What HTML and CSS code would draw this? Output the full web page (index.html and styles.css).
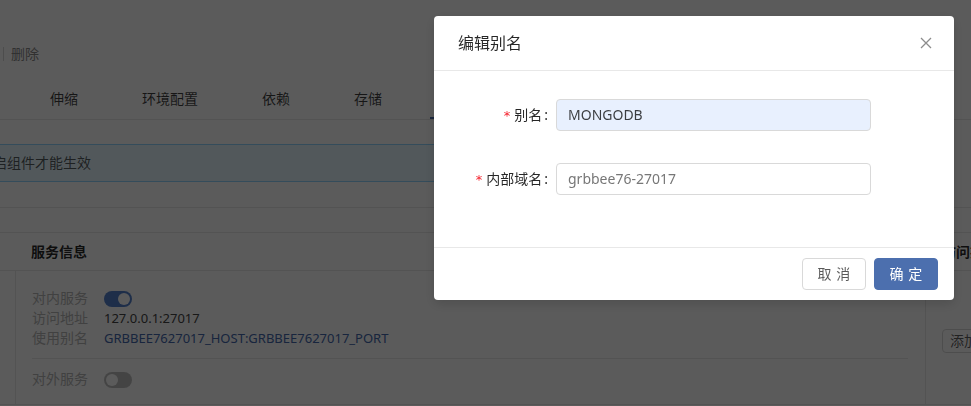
FILE: index.html
```html
<!DOCTYPE html>
<html lang="zh-CN">
<head>
<meta charset="utf-8">
<title>编辑别名</title>
<link rel="stylesheet" href="styles.css">
</head>
<body>
<div class="page">
  <div class="toolbar"><span class="sep"></span><span class="action">删除</span></div>
  <div class="tabs">
    <div class="tab">伸缩</div>
    <div class="tab">环境配置</div>
    <div class="tab">依赖</div>
    <div class="tab">存储</div>
    <div class="tab active">端口</div>
    <div class="tab">插件</div>
    <div class="tab">构建源</div>
  </div>
  <div class="alert">修改后需要重启组件才能生效</div>
  <div class="gap"></div>
  <div class="card">
    <div class="col-main">
      <div class="card-head main-head">服务信息</div>
      <div class="card-body">
        <div class="row"><span class="k">对内服务</span><span class="switch on"><span class="knob"></span></span></div>
        <div class="row"><span class="k">访问地址</span><span class="v">127.0.0.1:27017</span></div>
        <div class="row"><span class="k">使用别名</span><span class="v link">GRBBEE7627017_HOST:GRBBEE7627017_PORT</span></div>
        <div class="divider"></div>
        <div class="row out"><span class="k">对外服务</span><span class="switch"><span class="knob"></span></span></div>
      </div>
    </div>
    <div class="col-side">
      <div class="card-head">访问控制</div>
      <div class="side-body"><span class="btn-sm">添加规则</span></div>
    </div>
  </div>
</div>

<div class="mask"></div>
<div class="modal">
  <div class="modal-head">
    <div class="modal-title">编辑别名</div>
    <span class="close">
      <svg width="12" height="12" viewBox="0 0 12 12"><path d="M1 1 L11 11 M11 1 L1 11" stroke="#8c8c8c" stroke-width="1.3" fill="none"/></svg>
    </span>
  </div>
  <div class="modal-body">
    <div class="form-item">
      <label class="form-label"><span class="req">*</span>别名</label>
      <div class="input filled">MONGODB</div>
    </div>
    <div class="form-item">
      <label class="form-label"><span class="req">*</span>内部域名</label>
      <div class="input">grbbee76-27017</div>
    </div>
  </div>
  <div class="modal-foot">
    <span class="btn"><span class="sp">取消</span></span>
    <span class="btn primary"><span class="sp">确定</span></span>
  </div>
</div>
</body>
</html>
```

FILE: styles.css
```css
* { box-sizing: border-box; }
html, body { margin: 0; padding: 0; }
body {
  width: 971px;
  height: 406px;
  overflow: hidden;
  background: #fff;
  font-family: "Noto Sans", "Noto Sans CJK SC", sans-serif;
  font-size: 14px;
  color: rgba(0,0,0,.65);
}
.page { width: 971px; }

.toolbar {
  padding-top: 44px;
  height: 64px;
  line-height: 20px;
  display: flex;
  align-items: center;
}
.toolbar .sep {
  width: 1px;
  height: 14px;
  background: #d9d9d9;
  margin-left: 3px;
  margin-right: 7px;
}
.toolbar .action { color: #8a8a8a; }

.tabs {
  height: 56px;
  border-bottom: 1px solid #e8e8e8;
  display: flex;
  align-items: flex-end;
  padding-left: 34px;
  white-space: nowrap;
  overflow: hidden;
}
.tab {
  flex: none;
  padding: 0 16px 9px;
  margin-right: 32px;
  line-height: 22px;
  color: rgba(0,0,0,.75);
}
.tab.active {
  color: #4c6fae;
  padding-bottom: 7px;
  border-bottom: 2px solid #4c6fae;
}

.alert {
  margin: 24px 63px 25px -107px;
  height: 38px;
  border: 1px solid #91d5ff;
  background: #e6f7ff;
  padding: 7px 15px;
  line-height: 22px;
  color: rgba(0,0,0,.65);
  white-space: nowrap;
}

.gap {
  height: 25px;
  border-top: 1px solid #e8e8e8;
}

.card {
  display: flex;
  border-top: 1px solid #e8e8e8;
  border-bottom: 1px solid #e8e8e8;
}
.col-main { width: 925px; flex: none; }
.col-side { flex: 1; border-left: 1px solid #e8e8e8; min-width: 0; }
.card-head {
  padding: 8px 16px 7px;
  line-height: 22px;
  border-bottom: 1px solid #e8e8e8;
  font-weight: 700;
  color: rgba(0,0,0,.85);
  white-space: nowrap;
}
.main-head { padding-left: 31px; }

.card-body {
  margin-left: 15px;
  border-left: 1px solid #e8e8e8;
  padding: 17px 17px 15px 16px;
}
.row {
  display: flex;
  align-items: center;
  height: 20px;
  line-height: 20px;
}
.row.out { margin-top: 10px; }
.k { width: 72px; flex: none; color: #b5b5b5; }
.v { color: #444; font-size: 13px; }
.v.link { color: #4468ad; }
.divider {
  height: 1px;
  background: #e8e8e8;
  margin: 10px 0;
}
.switch {
  width: 28px;
  height: 16px;
  border-radius: 8px;
  background: rgba(0,0,0,.25);
  padding: 2px;
  display: flex;
  justify-content: flex-start;
  margin-top: 2px;
}
.switch.on { background: #5580cc; justify-content: flex-end; }
.knob {
  width: 12px;
  height: 12px;
  border-radius: 50%;
  background: #fff;
}

.side-body { padding: 58px 0 0 16px; white-space: nowrap; }
.btn-sm {
  display: inline-block;
  height: 24px;
  line-height: 22px;
  padding: 0 7px;
  border: 1px solid #d9d9d9;
  border-radius: 4px;
  color: rgba(0,0,0,.65);
}

/* modal */
.mask {
  position: fixed;
  inset: 0;
  background: rgba(0,0,0,.645);
}
.modal {
  position: fixed;
  top: 16px;
  left: 434px;
  width: 520px;
  background: #fff;
  border-radius: 4px;
  box-shadow: 0 4px 12px rgba(0,0,0,.15);
}
.modal-head {
  position: relative;
  padding: 16px 24px;
  border-bottom: 1px solid #e8e8e8;
}
.modal-title {
  font-size: 16px;
  line-height: 22px;
  color: rgba(0,0,0,.85);
}
.close {
  position: absolute;
  top: 0;
  right: 0;
  width: 56px;
  height: 54px;
  display: flex;
  align-items: center;
  justify-content: center;
}
.close svg { display: block; }

.modal-body { padding: 28px 24px 20px; }
.form-item {
  display: flex;
  align-items: center;
  height: 32px;
  margin-bottom: 32px;
}
.form-label {
  width: 98px;
  flex: none;
  text-align: right;
  line-height: 32px;
  color: rgba(0,0,0,.85);
  white-space: nowrap;
}
.form-label::after {
  content: ":";
  margin: 0 8px 0 2px;
}
.req {
  color: #f5222d;
  margin-right: 4px;
  font-family: "DejaVu Sans", sans-serif;
  font-size: 13px;
}
.input {
  width: 315px;
  height: 32px;
  border: 1px solid #d9d9d9;
  border-radius: 4px;
  padding: 0 11px;
  line-height: 30px;
  color: #777;
}
.input.filled {
  background: #e8f0fe;
  color: rgba(0,0,0,.75);
}

.modal-foot {
  border-top: 1px solid #e8e8e8;
  padding: 10px 16px;
  display: flex;
  justify-content: flex-end;
  gap: 8px;
}
.btn {
  height: 32px;
  width: 64px;
  border: 1px solid #d9d9d9;
  border-radius: 4px;
  line-height: 30px;
  text-align: center;
  white-space: nowrap;
  color: rgba(0,0,0,.65);
  background: #fff;
}
.btn .sp {
  letter-spacing: .34em;
  margin-right: -.34em;
}
.btn.primary {
  background: #4c6fae;
  border-color: #4c6fae;
  color: #fff;
}
```
